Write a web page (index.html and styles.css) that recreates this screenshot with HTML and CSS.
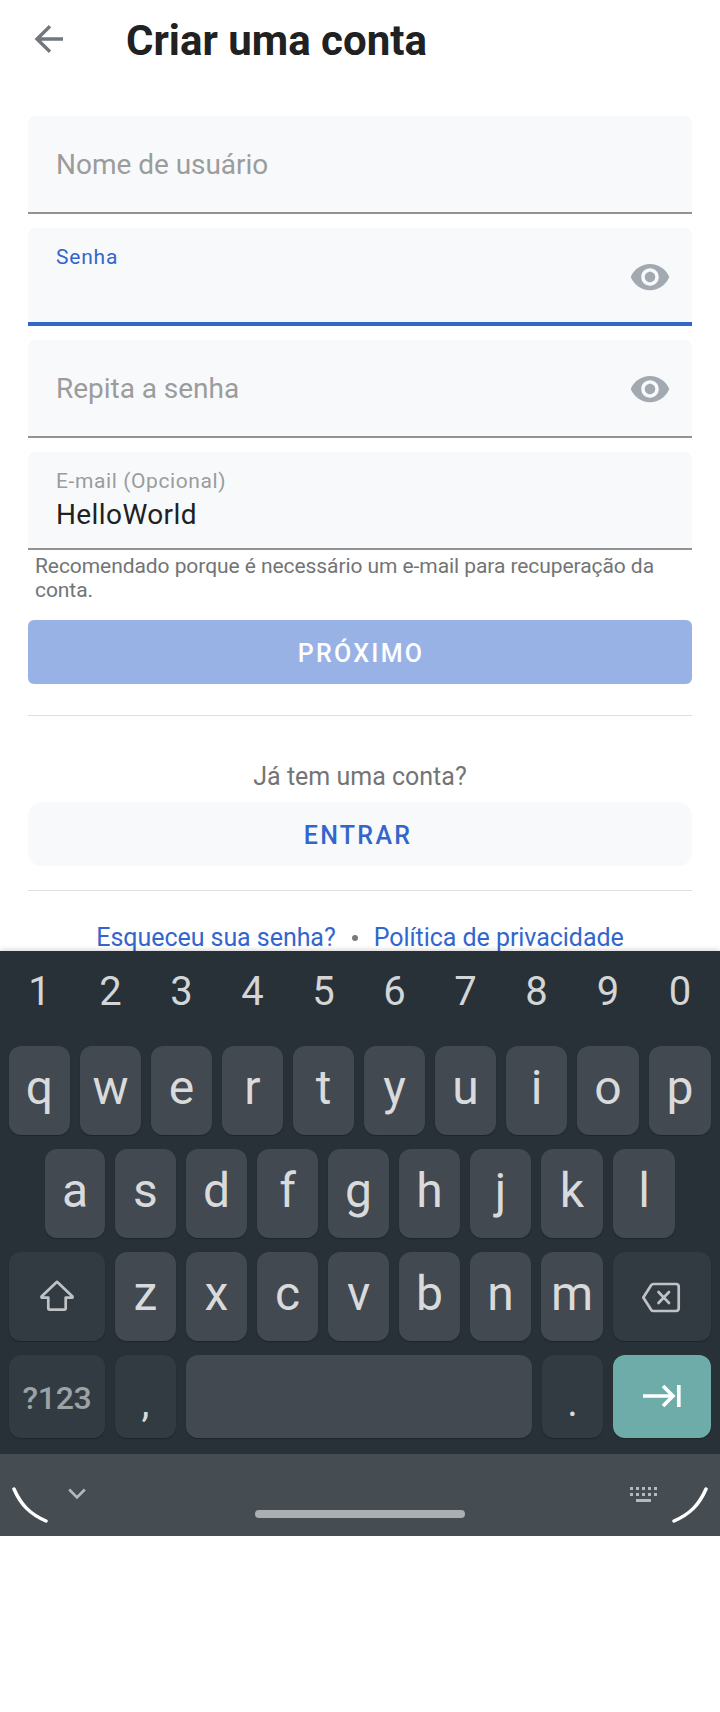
FILE: index.html
```html
<!DOCTYPE html>
<html lang="pt-BR">
<head>
<meta charset="utf-8">
<title>Criar uma conta</title>
<link rel="stylesheet" href="styles.css">
</head>
<body>
<main class="page">
  <header class="header">
    <svg class="back" viewBox="0 0 32 32"><path d="M31 16H4.5M18 3.2 5 16l13 12.8"/></svg>
    <h1 class="title">Criar uma conta</h1>
  </header>
  <form class="form">
    <div class="field"><span class="placeholder">Nome de usuário</span></div>
    <div class="field field-focused">
      <div class="stack"><span class="label">Senha</span></div>
      <svg class="eye" viewBox="0 0 24 24"><path d="M12 4.5C7 4.5 2.73 7.61 1 12c1.73 4.39 6 7.5 11 7.5s9.27-3.11 11-7.5c-1.73-4.39-6-7.5-11-7.5zM12 17c-2.76 0-5-2.24-5-5s2.24-5 5-5 5 2.24 5 5-2.24 5-5 5zm0-8c-1.66 0-3 1.34-3 3s1.34 3 3 3 3-1.34 3-3-1.34-3-3-3z"/></svg>
    </div>
    <div class="field">
      <span class="placeholder">Repita a senha</span>
      <svg class="eye" viewBox="0 0 24 24"><path d="M12 4.5C7 4.5 2.73 7.61 1 12c1.73 4.39 6 7.5 11 7.5s9.27-3.11 11-7.5c-1.73-4.39-6-7.5-11-7.5zM12 17c-2.76 0-5-2.24-5-5s2.24-5 5-5 5 2.24 5 5-2.24 5-5 5zm0-8c-1.66 0-3 1.34-3 3s1.34 3 3 3 3-1.34 3-3-1.34-3-3-3z"/></svg>
    </div>
    <div class="field">
      <div class="stack"><span class="label">E-mail (Opcional)</span><span class="value">HelloWorld</span></div>
    </div>
  </form>
  <p class="helper">Recomendado porque é necessário um e-mail para recuperação da conta.</p>
  <div class="button button-primary">PRÓXIMO</div>
  <div class="divider"></div>
  <p class="question">Já tem uma conta?</p>
  <div class="button button-secondary">ENTRAR</div>
  <div class="divider divider-last"></div>
  <div class="links"><span>Esqueceu sua senha?</span><i class="bullet"></i><span>Política de privacidade</span></div>
</main>
<section class="keyboard">
  <div class="digits"><span>1</span><span>2</span><span>3</span><span>4</span><span>5</span><span>6</span><span>7</span><span>8</span><span>9</span><span>0</span></div>
  <div class="row"><b>q</b><b>w</b><b>e</b><b>r</b><b>t</b><b>y</b><b>u</b><b>i</b><b>o</b><b>p</b></div>
  <div class="row row-inset"><b>a</b><b>s</b><b>d</b><b>f</b><b>g</b><b>h</b><b>j</b><b>k</b><b>l</b></div>
  <div class="row row-wide">
    <b class="special"><svg class="shift" viewBox="0 0 36 34"><path d="M18 2.8 2.5 17.6v1H9.3V29.3q0 1.4 1.4 1.4H25.3q1.4 0 1.4-1.4V18.6H33.500v-1z"/></svg></b>
    <b>z</b><b>x</b><b>c</b><b>v</b><b>b</b><b>n</b><b>m</b>
    <b class="special"><svg class="erase" viewBox="0 0 40 32"><path d="M12.300 2H35q2.700 0 2.700 2.700V26.300Q37.700 29 35 29H12.300Q11 29 10.300 28L2.300 15.500 10.300 3Q11 2 12.300 2zM17.500 10l10.500 11M28 10l-10.500 11"/></svg></b>
  </div>
  <div class="row row-bottom">
    <b class="special symbols">?123</b><b class="special punct">,</b><b></b><b class="special punct">.</b>
    <b class="next"><svg class="tab" viewBox="0 0 38 24"><path d="M0 12H30M20 2l10 10-10 10M35.800 1V23"/></svg></b>
  </div>
</section>
<footer class="nav">
  <svg class="arc" viewBox="0 0 36 36"><path d="M2 2C9 18 18 27 34 34"/></svg>
  <svg class="chevron" viewBox="0 0 18 12"><path d="M1.200 1.500 9 9.500 16.800 1.500"/></svg>
  <i class="home"></i>
  <svg class="keys" viewBox="0 0 27 15"><path d="M0 0h3v3H0zM6 0h3v3H6zM12 0h3v3h-3zM18 0h3v3h-3zM24 0h3v3h-3zM0 6h3v3H0zM6 6h3v3H6zM12 6h3v3h-3zM18 6h3v3h-3zM24 6h3v3h-3zM6 12h15v3H6z"/></svg>
  <svg class="arc" viewBox="0 0 36 36"><path d="M34 2C27 18 18 27 2 34"/></svg>
</footer>
</body>
</html>
```
FILE: styles.css
```css
* { box-sizing: border-box; }
body { margin: 0; background: #fff; font-family: Roboto, "Liberation Sans", sans-serif; }
h1, p { margin: 0; }
svg { display: block; flex: none; fill: none; }

.page { height: 951px; padding: 0 28px; overflow: hidden; }
.header { display: flex; height: 116px; padding-left: 4px; }
.back { width: 32px; height: 32px; margin-top: 23px; stroke: #72777d; stroke-width: 3.4; }
.title { margin-left: 62px; font-size: 42px; line-height: 81px; font-weight: 700; color: #202122; }

.form { display: flex; flex-direction: column; gap: 14px; }
.field { display: flex; height: 98px; padding: 0 21px 0 28px; justify-content: space-between; background: #f8f9fb; border-bottom: 2px solid #919293; border-radius: 7px 7px 0 0; }
.field-focused { border-bottom: 4px solid #3366cc; }
.field-focused .label { color: #3366cc; letter-spacing: .8px; }
.placeholder { font-size: 28px; line-height: 97px; letter-spacing: -.03px; color: #9b9c9c; }
.stack { display: flex; flex-direction: column; padding-top: 17px; }
.label { font-size: 21px; line-height: 24px; letter-spacing: .6px; color: #9b9c9d; }
.value { font-size: 28px; line-height: 44px; letter-spacing: .4px; color: #202122; }
.eye { width: 42px; height: 42px; margin-top: 28px; fill: #a2a9b1; }

.helper { padding: 4px 0 18px 7px; font-size: 21px; line-height: 24px; letter-spacing: -.07px; color: #737475; }
.button { height: 64px; font-size: 25px; font-weight: 500; text-align: center; }
.button-primary { padding-left: 2px; background: #99b2e6; border-radius: 6px; color: #fff; line-height: 68px; letter-spacing: 2.3px; }
.button-secondary { padding-right: 4px; background: #f8f9fb; border-radius: 14px; color: #3366cc; line-height: 67px; letter-spacing: 2.3px; }
.divider { height: 1px; margin-top: 31px; background: #dddfe0; }
.divider-last { margin-top: 24px; }
.question { padding: 46px 0 10px; font-size: 25px; line-height: 30px; color: #737475; text-align: center; }
.links { display: flex; justify-content: center; align-items: center; gap: 16px; margin-top: 32px; font-size: 25px; line-height: 30px; letter-spacing: -.05px; color: #3366cc; }
.bullet { width: 6px; height: 6px; border-radius: 50%; background: #777b80; }

.keyboard { position: relative; height: 503px; padding: 0 9px; background: #273137; color: #d9dadc; box-shadow: 0 -1px 5px rgba(0, 0, 0, .18); }
.digits { display: grid; grid-template-columns: repeat(8, 61px) 62px 62px; gap: 10px; height: 95px; font-size: 40px; line-height: 81px; text-align: center; color: #d3d5d6; }
.row { display: grid; grid-template-columns: repeat(8, 61px) 62px 62px; grid-template-rows: 89px; gap: 10px; height: 89px; margin-bottom: 14px; }
.row b { display: flex; justify-content: center; border-radius: 12px; background: #424950; box-shadow: 0 1px 1px #1d262b; font-size: 48px; line-height: 84px; font-weight: 400; }
.row-inset { grid-template-columns: 60px repeat(6, 61px) 62px 62px; padding: 0 36px; }
.row-wide { grid-template-columns: 96px repeat(6, 61px) 62px 98px; }
.row .special { background: #313b41; }
.row-bottom { grid-template-columns: 96px 61px 346px 61px 98px; grid-template-rows: 83px; height: 83px; margin-bottom: 0; }
.row-bottom .symbols { font-size: 32px; line-height: 86px; font-weight: 500; letter-spacing: -.3px; color: #9da2a5; }
.row-bottom .punct { font-size: 40px; line-height: 95px; }
.row-bottom .next { background: #6daca8; }
.shift { width: 36px; height: 34px; margin-top: 27px; stroke: #c0c2c5; stroke-width: 2.7; stroke-linejoin: round; }
.erase { width: 40px; height: 32px; margin: 30px 2px 0 0; stroke: #c0c2c5; stroke-width: 2.7; stroke-linejoin: round; stroke-linecap: round; }
.tab { width: 38px; height: 24px; margin-top: 29px; stroke: #fff; stroke-width: 3.7; }

.nav { display: flex; position: relative; height: 82px; padding: 0 12px; background: #464d52; }
.arc { width: 36px; height: 36px; margin-top: 33px; stroke: #fff; stroke-width: 3.5; stroke-linecap: round; }
.chevron { width: 18px; height: 12px; margin: 34px 0 0 20px; stroke: #b5b9bb; stroke-width: 2.6; }
.home { width: 210px; height: 8px; margin: 56px 0 0 169px; border-radius: 4px; background: #abafb2; }
.keys { width: 27px; height: 15px; margin: 33px 15px 0 165px; fill: #b5b9bb; }
```
